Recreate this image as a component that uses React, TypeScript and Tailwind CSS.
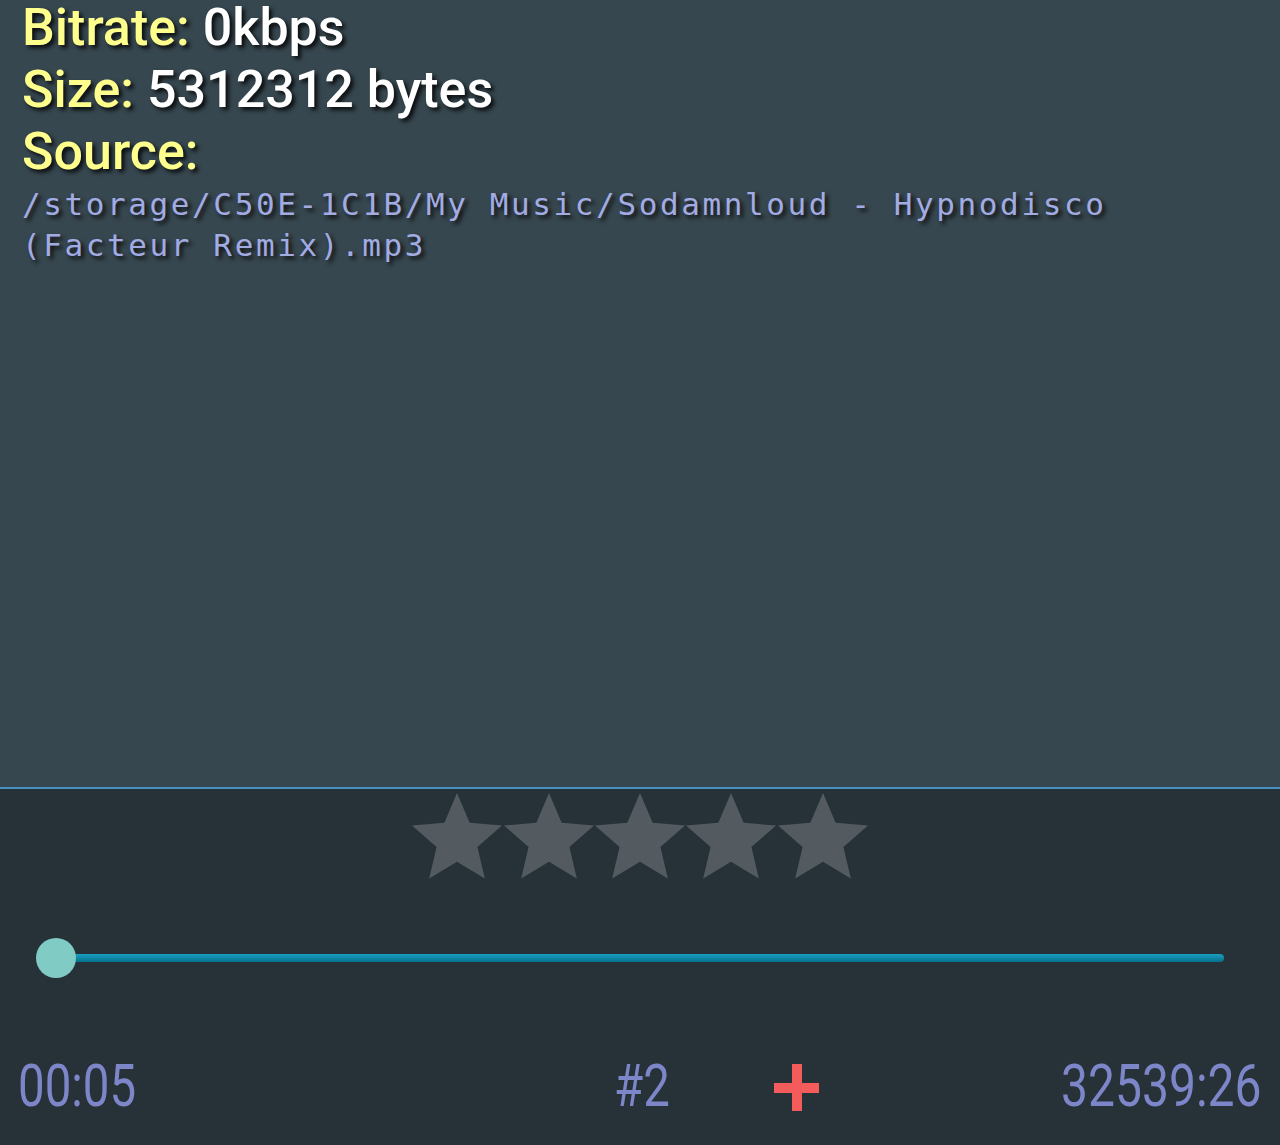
import React from "react";

const Star = () => (
  <svg width="90" height="86" viewBox="2 2 20 19.1" className="block">
    <path
      d="M12 17.27L18.18 21l-1.64-7.03L22 9.24l-7.19-.61L12 2 9.19 8.63 2 9.24l5.46 4.73L5.82 21z"
      fill="#535b61"
    />
  </svg>
);

export default function App() {
  const shadow = "[text-shadow:3px_3px_4px_rgba(0,0,0,0.85)]";
  return (
    <div className="w-[1280px] h-[1145px] flex flex-col overflow-hidden">
      <div className="h-[787px] bg-[#37474f] pl-[22px] pr-[20px] shrink-0">
        <div
          className={`text-[52px] leading-[62px] font-medium ${shadow}`}
          style={{ fontFamily: "Roboto, sans-serif" }}
        >
          <div className="leading-[56px]">
            <span className="text-[#ffff8d]">Bitrate:</span>{" "}
            <span className="text-white">0kbps</span>
          </div>
          <div className="mt-[3px]">
            <span className="text-[#ffff8d]">Size:</span>{" "}
            <span className="text-white">5312312 bytes</span>
          </div>
          <div>
            <span className="text-[#ffff8d]">Source:</span>
          </div>
        </div>
        <div
          className={`mt-[1px] text-[31px] leading-[41px] tracking-[2.6px] text-[#a3abe3] ${shadow}`}
          style={{ fontFamily: '"DejaVu Sans Mono", monospace' }}
        >
          <div className="whitespace-nowrap">/storage/C50E-1C1B/My Music/Sodamnloud - Hypnodisco</div>
          <div className="whitespace-nowrap">(Facteur Remix).mp3</div>
        </div>
      </div>
      <div className="h-[2px] bg-[#4690c2] shrink-0" />
      <div className="flex-1 bg-[#263238] flex flex-col">
        <div className="pt-[4px] flex justify-center gap-[1.3px]">
          <Star />
          <Star />
          <Star />
          <Star />
          <Star />
        </div>
        <div className="mt-[59px] flex items-center pl-[36px] pr-[56px]">
          <div className="w-[40px] h-[40px] rounded-full bg-[#80cbc4] shrink-0 relative z-10" />
          <div className="flex-1 h-[8px] rounded-full bg-gradient-to-b from-[#1aa0c2] to-[#05708c] -ml-[20px]" />
        </div>
        <div
          className="mt-[78px] flex items-start pl-[18px] pr-[18px] h-[60px] text-[60px] leading-[60px] font-normal text-[#7d86c8]"
          style={{ fontFamily: "Roboto, sans-serif" }}
        >
          <div className="w-[117px] shrink-0">
            <span className="inline-block scale-x-[0.79] origin-left whitespace-nowrap">00:05</span>
          </div>
          <div className="w-[479px] shrink-0" />
          <div className="w-[49px] shrink-0">
            <span className="inline-block scale-x-[0.79] origin-left whitespace-nowrap">#2</span>
          </div>
          <div className="w-[111px] shrink-0" />
          <div className="w-[45px] h-[47px] mt-[8px] shrink-0 relative">
            <div className="absolute left-[18px] top-0 w-[10px] h-[47px] bg-[#f45b5b]" />
            <div className="absolute left-0 top-[19px] w-[45px] h-[10px] bg-[#f45b5b]" />
          </div>
          <div className="ml-auto w-[200px] shrink-0 flex justify-end">
            <span className="inline-block scale-x-[0.8] origin-right whitespace-nowrap">32539:26</span>
          </div>
        </div>
      </div>
    </div>
  );
}
